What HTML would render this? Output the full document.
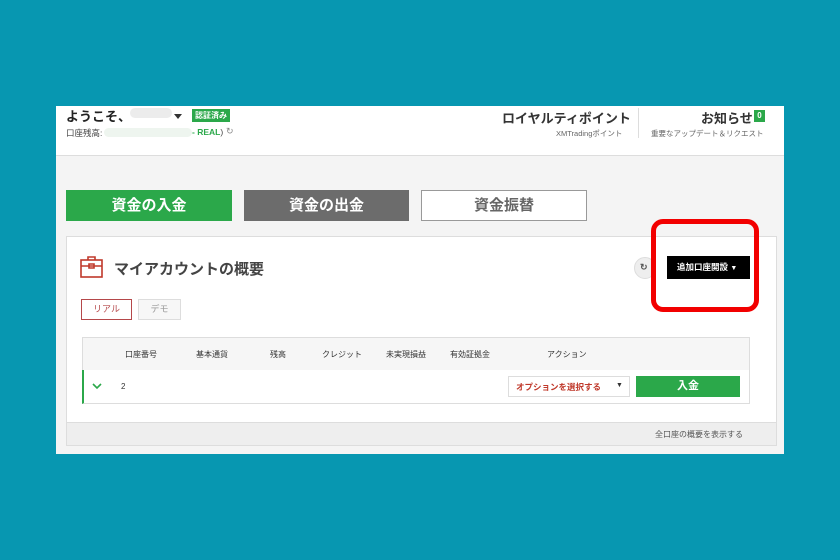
<!DOCTYPE html>
<html><head><meta charset="utf-8"><style>
*{margin:0;padding:0;box-sizing:border-box}
body{width:840px;height:560px;background:#0797b1;position:relative;overflow:hidden;font-family:"Liberation Sans","Noto Sans CJK JP",sans-serif;color:#333}
.a{position:absolute}
.t{white-space:nowrap}
</style></head><body>
<div class="a" style="left:56px;top:106px;width:728px;height:348px;background:#f4f4f4"></div>
<div class="a" style="left:56px;top:106px;width:728px;height:50px;background:#fff;border-bottom:1px solid #ddd"></div>
<div class="a t" style="left:66px;top:106px;font-size:13px;font-weight:bold;color:#222">ようこそ、</div>
<div class="a" style="left:130px;top:108px;width:42px;height:10px;background:#ececec;border-radius:5px"></div>
<div class="a" style="left:174px;top:114px;border-left:4px solid transparent;border-right:4px solid transparent;border-top:5px solid #333"></div>
<div class="a t" style="left:192px;top:109px;background:#2ba84a;color:#fff;font-size:8px;font-weight:bold;padding:1px 3px">認証済み</div>
<div class="a t" style="left:66px;top:127px;font-size:8.5px;color:#444">口座残高:</div>
<div class="a" style="left:104px;top:128px;width:88px;height:9px;background:#eef5ef;border-radius:5px"></div>
<div class="a t" style="left:192px;top:127px;font-size:8.5px;color:#2ba84a;font-weight:bold">- REAL<span style="color:#444;font-weight:normal">)</span></div>
<div class="a t" style="left:226px;top:126px;font-size:9px;color:#888">↻</div>
<div class="a t" style="left:502px;top:108px;font-size:13px;font-weight:bold;color:#333">ロイヤルティポイント</div>
<div class="a t" style="left:556px;top:128px;font-size:7.5px;color:#666">XMTradingポイント</div>
<div class="a" style="left:638px;top:108px;width:1px;height:30px;background:#ddd"></div>
<div class="a t" style="left:701px;top:108px;font-size:13px;font-weight:bold;color:#333">お知らせ</div>
<div class="a t" style="left:754px;top:110px;width:11px;height:12px;background:#2ba84a;color:#fff;font-size:8px;font-weight:bold;text-align:center;line-height:12px">0</div>
<div class="a t" style="left:651px;top:128px;font-size:7.5px;color:#666">重要なアップデート＆リクエスト</div>

<div class="a t" style="left:66px;top:190px;width:166px;height:31px;background:#2ba84a;color:#fff;font-size:15px;font-weight:bold;text-align:center;line-height:31px">資金の入金</div>
<div class="a t" style="left:244px;top:190px;width:165px;height:31px;background:#6c6c6c;color:#fff;font-size:15px;font-weight:bold;text-align:center;line-height:31px">資金の出金</div>
<div class="a t" style="left:421px;top:190px;width:166px;height:31px;background:#fff;border:1px solid #999;color:#666;font-size:15px;font-weight:bold;text-align:center;line-height:29px">資金振替</div>

<div class="a" style="left:66px;top:236px;width:711px;height:210px;background:#fff;border:1px solid #ddd"></div>
<div class="a" style="left:67px;top:422px;width:709px;height:23px;background:#eee;border-top:1px solid #ddd"></div>
<div class="a t" style="left:655px;top:429px;font-size:8px;color:#555">全口座の概要を表示する</div>
<svg class="a" style="left:80px;top:255px" width="24" height="24" viewBox="0 0 24 24" fill="none" stroke="#c0392b" stroke-width="1.6"><rect x="1" y="5" width="21" height="17"/><path d="M8 5V2h7v3M1 11h21M9 9h5v4H9z"/></svg>
<div class="a t" style="left:114px;top:258px;font-size:15px;font-weight:bold;color:#444">マイアカウントの概要</div>
<div class="a" style="left:634px;top:257px;width:22px;height:22px;border-radius:50%;background:#eee;border:1px solid #ddd"></div>
<div class="a t" style="left:640px;top:262px;font-size:9px;color:#555;font-weight:bold">↻</div>
<div class="a t" style="left:667px;top:256px;width:83px;height:23px;background:#000;color:#fff;font-size:8.5px;font-weight:bold;line-height:23px;padding-left:10px">追加口座開設 <span style="font-size:7px">▼</span></div>
<div class="a" style="left:651px;top:219px;width:108px;height:93px;border:5px solid #f20000;border-radius:12px"></div>

<div class="a t" style="left:81px;top:299px;width:51px;height:21px;border:1px solid #b5484a;color:#b5484a;font-size:9px;text-align:center;line-height:19px">リアル</div>
<div class="a t" style="left:138px;top:299px;width:43px;height:21px;border:1px solid #ddd;background:#f7f7f7;color:#999;font-size:9px;text-align:center;line-height:19px">デモ</div>

<div class="a" style="left:82px;top:337px;width:668px;height:67px;border:1px solid #ddd;background:#f6f6f6"></div>
<div class="a" style="left:82px;top:370px;width:668px;height:34px;background:#fff;border-left:2px solid #2ba84a;border-bottom:1px solid #ddd;border-right:1px solid #ddd"></div>
<div class="a t" style="left:125px;top:349px;font-size:8px;color:#333">口座番号</div>
<div class="a t" style="left:196px;top:349px;font-size:8px;color:#333">基本通貨</div>
<div class="a t" style="left:270px;top:349px;font-size:8px;color:#333">残高</div>
<div class="a t" style="left:322px;top:349px;font-size:8px;color:#333">クレジット</div>
<div class="a t" style="left:386px;top:349px;font-size:8px;color:#333">未実現損益</div>
<div class="a t" style="left:450px;top:349px;font-size:8px;color:#333">有効証拠金</div>
<div class="a t" style="left:547px;top:349px;font-size:8px;color:#333">アクション</div>
<svg class="a" style="left:92px;top:383px" width="10" height="7" viewBox="0 0 10 7" fill="none" stroke="#2ba84a" stroke-width="1.6"><path d="M1 1l4 4 4-4"/></svg>
<div class="a t" style="left:121px;top:382px;font-size:8px;color:#333">2</div>
<div class="a" style="left:508px;top:376px;width:122px;height:21px;border:1px solid #ddd;background:#fff"></div>
<div class="a t" style="left:516px;top:381px;font-size:8.5px;font-weight:bold;color:#c0392b">オプションを選択する</div>
<div class="a t" style="left:616px;top:382px;font-size:7px;color:#333">▼</div>
<div class="a t" style="left:636px;top:376px;width:104px;height:21px;background:#2ba84a;color:#fff;font-size:11px;font-weight:bold;text-align:center;line-height:21px">入金</div>
</body></html>
